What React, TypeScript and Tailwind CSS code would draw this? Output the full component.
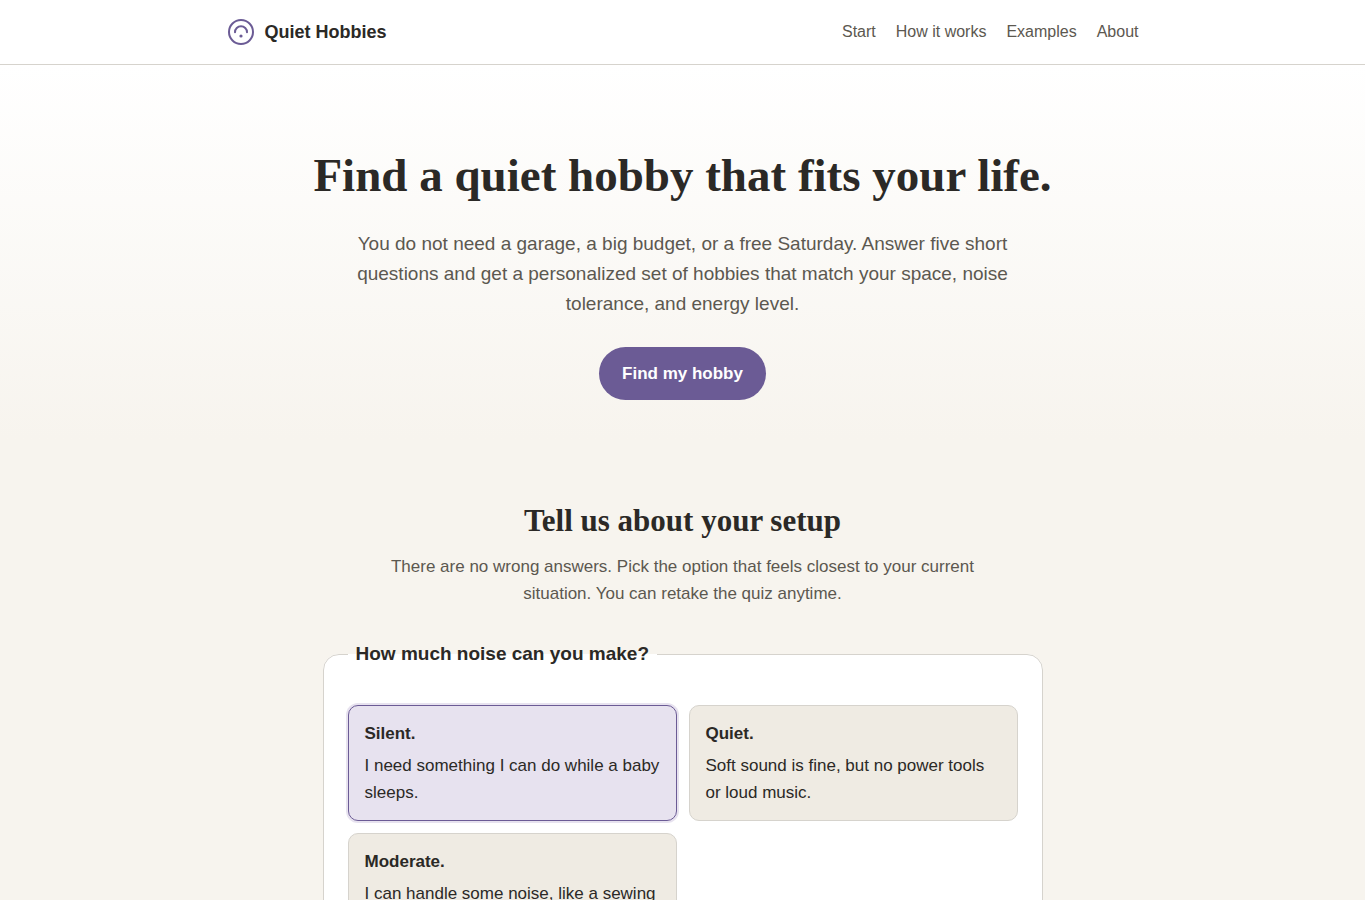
import { useState } from 'react';

const navLinks = [
  { href: '#start', label: 'Start' },
  { href: '#how', label: 'How it works' },
  { href: '#examples', label: 'Examples' },
  { href: '#about', label: 'About' },
];

const noiseOptions = [
  { value: 'silent', title: 'Silent.', text: 'I need something I can do while a baby sleeps.' },
  { value: 'quiet', title: 'Quiet.', text: 'Soft sound is fine, but no power tools or loud music.' },
  { value: 'moderate', title: 'Moderate.', text: 'I can handle some noise, like a sewing machine.' },
];

function Logo() {
  return (
    <svg className="w-7 h-7 text-[#6b5b95]" viewBox="0 0 28 28" fill="none" stroke="currentColor" aria-hidden="true">
      <circle cx="14" cy="14" r="12" strokeWidth={2} />
      <path d="M8 14.3a6 6 0 0 1 12 0" strokeWidth={2} strokeLinecap="round" />
      <circle cx="14" cy="18" r="1.6" fill="currentColor" stroke="none" />
    </svg>
  );
}

function Header() {
  return (
    <header className="bg-white border-b border-[#d6d3cd]">
      <div className="max-w-[960px] h-16 mx-auto px-6 flex items-center justify-between">
        <a href="#start" className="flex items-center gap-2.5 text-lg font-bold">
          <Logo />
          Quiet Hobbies
        </a>
        <nav className="flex gap-5 text-base text-[#5c5850]">
          {navLinks.map((link) => (
            <a key={link.href} href={link.href} className="hover:text-[#6b5b95]">
              {link.label}
            </a>
          ))}
        </nav>
      </div>
    </header>
  );
}

export default function App() {
  const [noise, setNoise] = useState('silent');

  return (
    <div className="min-h-screen bg-[#f7f4ee] text-[#2b2926] text-[17px] leading-[27px] font-['Liberation_Sans',sans-serif]">
      <Header />

      <main>
        {/* Hero */}
        <section id="start" className="bg-linear-to-b from-white to-[#f7f4ee] px-6 pt-20 pb-10 text-center">
          <h1 className="text-[47px] leading-[60px] font-bold font-['Liberation_Serif',serif]">
            Find a quiet hobby that fits your life.
          </h1>
          <p className="max-w-[660px] mx-auto mt-6 text-[19px] leading-[30px] text-[#5c5850]">
            You do not need a garage, a big budget, or a free Saturday. Answer five short questions and get a
            personalized set of hobbies that match your space, noise tolerance, and energy level.
          </p>
          <button
            type="button"
            className="mt-7 px-[23px] py-[13px] rounded-full bg-[#6b5b95] text-white font-bold hover:bg-[#5a4b82] transition-colors"
          >
            Find my hobby
          </button>
        </section>

        {/* Quiz */}
        <section className="max-w-[768px] mx-auto px-6 pt-15 pb-16">
          <div className="text-center">
            <h2 className="text-[31px] leading-[41px] font-bold font-['Liberation_Serif',serif]">
              Tell us about your setup
            </h2>
            <p className="max-w-[600px] mx-auto mt-3 text-[#5c5850]">
              There are no wrong answers. Pick the option that feels closest to your current situation. You can retake
              the quiz anytime.
            </p>
          </div>

          <fieldset className="mt-8 px-6 pt-9 pb-6 bg-white border border-[#d6d3cd] rounded-2xl">
            <legend className="px-2 text-[19px] leading-[30px] font-bold">How much noise can you make?</legend>
            <div className="grid sm:grid-cols-2 gap-3">
              {noiseOptions.map((option) => (
                <label
                  key={option.value}
                  className="flex flex-col gap-[5px] px-4 py-3.5 rounded-[10px] border border-[#d6d3cd] bg-[#efebe3] cursor-pointer has-checked:border-[#6b5b95] has-checked:bg-[#e7e2ef] has-checked:ring-2 has-checked:ring-[#e7e2ef]"
                >
                  <input
                    type="radio"
                    name="noise"
                    value={option.value}
                    checked={noise === option.value}
                    onChange={() => setNoise(option.value)}
                    className="sr-only"
                  />
                  <strong>{option.title}</strong>
                  <span>{option.text}</span>
                </label>
              ))}
            </div>
          </fieldset>
        </section>
      </main>
    </div>
  );
}
